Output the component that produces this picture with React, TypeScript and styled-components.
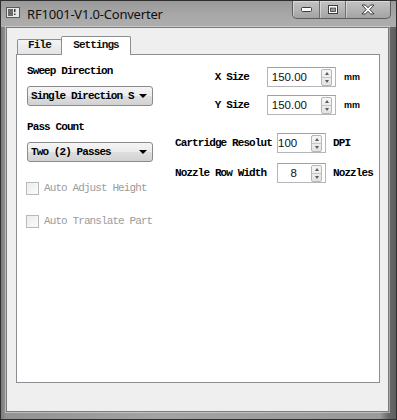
import React from "react";
import styled, { createGlobalStyle } from "styled-components";

const GlobalStyle = createGlobalStyle`
  html, body {
    margin: 0;
    padding: 0;
    background: #ffffff;
  }
  * {
    box-sizing: border-box;
  }
`;

const mono = `"Liberation Mono", "DejaVu Sans Mono", monospace`;
const sans = `"Liberation Sans", Arial, sans-serif`;

const Window = styled.div`
  width: 397px;
  height: 420px;
  display: flex;
  flex-direction: column;
  border: 1px solid #2e2e2e;
  background: linear-gradient(
    90deg,
    #7c7c7c 0,
    #939393 5px,
    #a3a3a3 40%,
    #9a9a9a 96%,
    #6a6a6a 98%,
    #5e5e5e 100%
  );
`;

const TitleBar = styled.div`
  height: 26px;
  display: flex;
  align-items: flex-start;
  flex-shrink: 0;
  background: linear-gradient(180deg, #9a9a9a 0, #a9a9a9 60%, #adadad 100%);
`;

const AppIcon = styled.svg`
  margin: 6px 0 0 5px;
  flex-shrink: 0;
`;

const Title = styled.div`
  margin: 5px 0 0 7px;
  font-family: "Noto Sans", ${sans};
  font-size: 13px;
  line-height: 16px;
  letter-spacing: -0.2px;
  color: #101010;
  flex: 1;
`;

const CaptionButtons = styled.div`
  display: flex;
  height: 18px;
  margin-right: 5px;
  border: 1px solid #5e5e5e;
  border-top: none;
  border-radius: 0 0 5px 5px;
  overflow: hidden;
  background: linear-gradient(180deg, #c2c2c2 0, #b4b4b4 50%, #a2a2a2 100%);
`;

const CaptionButton = styled.div<{ w: number; last?: boolean }>`
  width: ${p => p.w}px;
  height: 100%;
  display: flex;
  align-items: center;
  justify-content: center;
  border-right: ${p => (p.last ? "none" : "1px solid #6e6e6e")};
  box-shadow: inset 1px 1px 0 rgba(255, 255, 255, 0.4);
`;

const Client = styled.div`
  flex: 1;
  display: flex;
  flex-direction: column;
  margin: 0 7px 7px 5px;
  padding: 8px 8px 28px 9px;
  background: #efefef;
  border: 1px solid #7a7a7a;
  box-shadow: 0 0 0 1px rgba(230, 230, 230, 0.5);
`;

const TabBar = styled.div`
  display: flex;
  align-items: flex-end;
  height: 18px;
  padding-left: 1px;
`;

const Tab = styled.div<{ active?: boolean; w: number }>`
  width: ${p => p.w}px;
  height: ${p => (p.active ? 19 : 15)}px;
  margin-bottom: ${p => (p.active ? -1 : 0)}px;
  margin-left: ${p => (p.active ? -1 : 0)}px;
  position: relative;
  z-index: ${p => (p.active ? 1 : 0)};
  display: flex;
  align-items: flex-end;
  justify-content: center;
  padding-bottom: ${p => (p.active ? 4 : 3)}px;
  border: 1px solid #8c8e94;
  border-bottom: none;
  border-radius: 2px 2px 0 0;
  background: ${p =>
    p.active ? "#ffffff" : "linear-gradient(180deg, #f4f4f4, #e4e4e4)"};
  font-family: ${mono};
  font-weight: bold;
  font-size: 11px;
  letter-spacing: -0.9px;
  line-height: 12px;
  color: #111;
`;

const Pane = styled.div`
  flex: 1;
  display: flex;
  gap: 22px;
  padding: 9px 0 0 10px;
  background: #ffffff;
  border: 1px solid #8c8e94;
`;

const LeftColumn = styled.div`
  width: 126px;
  display: flex;
  flex-direction: column;
`;

const RightColumn = styled.div`
  display: flex;
  flex-direction: column;
  padding-top: 3px;
`;

const Label = styled.div<{ gap?: number }>`
  margin-top: ${p => p.gap ?? 0}px;
  height: 14px;
  line-height: 14px;
  font-family: ${mono};
  font-weight: bold;
  font-size: 11px;
  letter-spacing: -0.9px;
  color: #000;
  white-space: nowrap;
`;

const Combo = styled.div`
  margin-top: 8px;
  height: 20px;
  display: flex;
  align-items: center;
  padding: 0 5px 0 3px;
  border: 1px solid #8b8b8b;
  border-radius: 3px;
  background: linear-gradient(
    180deg,
    #f4f4f4 0,
    #ececec 48%,
    #dedede 52%,
    #d2d2d2 100%
  );
`;

const ComboText = styled.span`
  flex: 1;
  white-space: nowrap;
  font-family: ${mono};
  font-weight: bold;
  font-size: 11px;
  letter-spacing: -0.9px;
  color: #000;
`;

const Arrow = styled.span`
  width: 0;
  height: 0;
  border-left: 4px solid transparent;
  border-right: 4px solid transparent;
  border-top: 4px solid #000;
  margin-left: 3px;
`;

const CheckRow = styled.div`
  margin-top: 19px;
  height: 14px;
  display: flex;
  align-items: center;
  margin-left: -1px;
`;

const CheckBox = styled.span`
  width: 13px;
  height: 13px;
  border: 1px solid #b9b9b9;
  background: linear-gradient(135deg, #ececec, #fbfbfb);
  flex-shrink: 0;
`;

const CheckText = styled.span`
  margin-left: 5px;
  font-family: ${mono};
  font-size: 11px;
  letter-spacing: -0.9px;
  color: #9c9c9c;
  white-space: nowrap;
`;

const FieldRow = styled.div<{ gap: number }>`
  margin-top: ${p => p.gap}px;
  display: flex;
  align-items: center;
  height: 20px;
`;

const FieldLabel = styled(Label)<{ w: number; right?: boolean }>`
  width: ${p => p.w}px;
  text-align: ${p => (p.right ? "right" : "left")};
`;

const Spin = styled.div<{ w: number; offset: number }>`
  width: ${p => p.w}px;
  height: 20px;
  margin-left: ${p => p.offset}px;
  display: flex;
  align-items: center;
  padding: 1px 3px 1px 0;
  border: 1px solid #b4b6bc;
  border-top-color: #9fa1a7;
  background: #ffffff;
`;

const SpinValue = styled.span`
  flex: 1;
  text-align: right;
  padding-right: 14px;
  font-family: ${sans};
  font-size: 11.5px;
  color: #111;
`;

const SpinButtons = styled.div`
  width: 11px;
  height: 17px;
  display: flex;
  flex-direction: column;
  border: 1px solid #b7b7b7;
  border-radius: 2px;
  background: linear-gradient(180deg, #f6f6f6, #e3e3e3);
`;

const SpinHalf = styled.div<{ down?: boolean }>`
  flex: 1;
  display: flex;
  align-items: center;
  justify-content: center;
  border-top: ${p => (p.down ? "1px solid #c6c6c6" : "none")};
  &::after {
    content: "";
    width: 0;
    height: 0;
    border-left: 2.5px solid transparent;
    border-right: 2.5px solid transparent;
    ${p =>
      p.down
        ? "border-top: 3px solid #5a5a5a;"
        : "border-bottom: 3px solid #5a5a5a;"}
  }
`;

const Unit = styled.span<{ offset: number; small?: boolean }>`
  margin-left: ${p => p.offset}px;
  font-family: ${p => (p.small ? sans : mono)};
  font-weight: bold;
  font-size: ${p => (p.small ? 9 : 11)}px;
  letter-spacing: ${p => (p.small ? 0 : -0.9)}px;
  color: #000;
  white-space: nowrap;
`;

const SpinBox = ({ value, w, offset }: { value: string; w: number; offset: number }) => (
  <Spin w={w} offset={offset}>
    <SpinValue>{value}</SpinValue>
    <SpinButtons>
      <SpinHalf />
      <SpinHalf down />
    </SpinButtons>
  </Spin>
);

export default function App() {
  return (
    <>
      <GlobalStyle />
      <Window>
        <TitleBar>
          <AppIcon width="14" height="11" viewBox="0 0 14 11">
            <rect x="0.5" y="0.5" width="13" height="10" fill="#e8e8e8" stroke="#5a5a5a" />
            <rect x="2" y="2" width="5" height="7" fill="#6a6a6a" />
            <rect x="8" y="2" width="1.5" height="3" fill="#3a3a3a" />
            <rect x="8" y="6.5" width="1.5" height="1.5" fill="#3a3a3a" />
          </AppIcon>
          <Title>RF1001-V1.0-Converter</Title>
          <CaptionButtons>
            <CaptionButton w={27}>
              <svg width="11" height="5" viewBox="0 0 11 5">
                <rect x="0.5" y="0.5" width="10" height="4" rx="1" fill="#fff" stroke="#3c3c3c" />
              </svg>
            </CaptionButton>
            <CaptionButton w={26}>
              <svg width="10" height="9" viewBox="0 0 10 9">
                <rect x="0.5" y="0.5" width="9" height="8" fill="#fff" stroke="#3c3c3c" />
                <rect x="2.5" y="3" width="5" height="3.5" fill="#9a9a9a" stroke="#3c3c3c" strokeWidth="0.8" />
              </svg>
            </CaptionButton>
            <CaptionButton w={44} last>
              <svg width="14" height="11" viewBox="0 0 14 11">
                <path
                  d="M1 1 L4.5 1 L7 3.8 L9.5 1 L13 1 L8.8 5.5 L13 10 L9.5 10 L7 7.2 L4.5 10 L1 10 L5.2 5.5 Z"
                  fill="#fff"
                  stroke="#3c3c3c"
                  strokeWidth="1"
                  strokeLinejoin="round"
                />
              </svg>
            </CaptionButton>
          </CaptionButtons>
        </TitleBar>
        <Client>
          <TabBar>
            <Tab w={45}>File</Tab>
            <Tab w={70} active>
              Settings
            </Tab>
          </TabBar>
          <Pane>
            <LeftColumn>
              <Label>Sweep Direction</Label>
              <Combo>
                <ComboText>Single Direction S</ComboText>
                <Arrow />
              </Combo>
              <Label gap={14}>Pass Count</Label>
              <Combo>
                <ComboText>Two (2) Passes</ComboText>
                <Arrow />
              </Combo>
              <CheckRow>
                <CheckBox />
                <CheckText>Auto Adjust Height</CheckText>
              </CheckRow>
              <CheckRow>
                <CheckBox />
                <CheckText>Auto Translate Part</CheckText>
              </CheckRow>
            </LeftColumn>
            <RightColumn>
              <FieldRow gap={0}>
                <FieldLabel w={74} right>
                  X Size
                </FieldLabel>
                <SpinBox value="150.00" w={69} offset={18} />
                <Unit offset={8} small>
                  mm
                </Unit>
              </FieldRow>
              <FieldRow gap={8}>
                <FieldLabel w={74} right>
                  Y Size
                </FieldLabel>
                <SpinBox value="150.00" w={69} offset={18} />
                <Unit offset={8} small>
                  mm
                </Unit>
              </FieldRow>
              <FieldRow gap={18}>
                <FieldLabel w={97}>Cartridge Resolut</FieldLabel>
                <SpinBox value="100" w={49} offset={5} />
                <Unit offset={7}>DPI</Unit>
              </FieldRow>
              <FieldRow gap={10}>
                <FieldLabel w={97}>Nozzle Row Width</FieldLabel>
                <SpinBox value="8" w={49} offset={5} />
                <Unit offset={7}>Nozzles</Unit>
              </FieldRow>
            </RightColumn>
          </Pane>
        </Client>
      </Window>
    </>
  );
}
